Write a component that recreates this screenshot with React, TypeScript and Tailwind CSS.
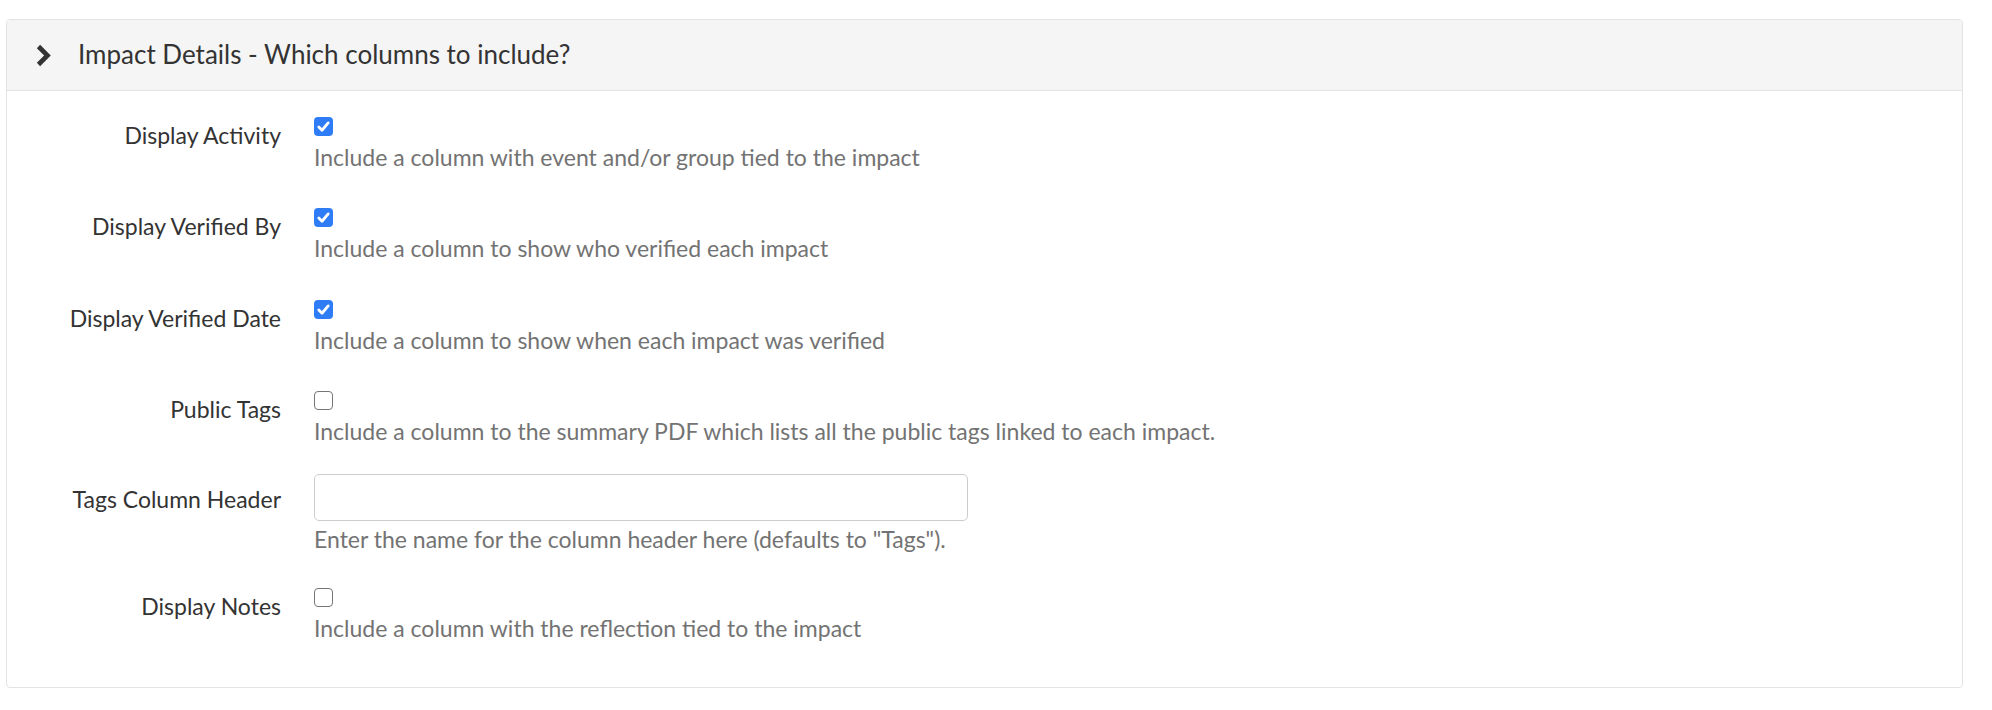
const rows: {
  label: string;
  help: string;
  kind: "check" | "text";
  checked?: boolean;
  gap: string;
}[] = [
  {
    label: "Display Activity",
    help: "Include a column with event and/or group tied to the impact",
    kind: "check",
    checked: true,
    gap: "mb-[37px]",
  },
  {
    label: "Display Verified By",
    help: "Include a column to show who verified each impact",
    kind: "check",
    checked: true,
    gap: "mb-[38px]",
  },
  {
    label: "Display Verified Date",
    help: "Include a column to show when each impact was verified",
    kind: "check",
    checked: true,
    gap: "mb-[37px]",
  },
  {
    label: "Public Tags",
    help: "Include a column to the summary PDF which lists all the public tags linked to each impact.",
    kind: "check",
    checked: false,
    gap: "mb-[29px]",
  },
  {
    label: "Tags Column Header",
    help: 'Enter the name for the column header here (defaults to "Tags").',
    kind: "text",
    gap: "mb-[35px]",
  },
  {
    label: "Display Notes",
    help: "Include a column with the reflection tied to the impact",
    kind: "check",
    checked: false,
    gap: "",
  },
];

const Checkbox = ({ checked }: { checked?: boolean }) =>
  checked ? (
    <div className="w-[19px] h-[19px] rounded-[4px] bg-[#2f7df6] flex items-center justify-center">
      <svg width="15" height="15" viewBox="0 0 16 16">
        <path
          d="M3 8.6 L6.4 12 L13 4.2"
          fill="none"
          stroke="white"
          strokeWidth="3"
          strokeLinecap="round"
          strokeLinejoin="round"
        />
      </svg>
    </div>
  ) : (
    <div className="w-[19px] h-[19px] rounded-[4px] border border-[#767676] bg-white" />
  );

export default function App() {
  return (
    <div className="min-h-screen bg-white pt-[19px] pl-[6px] pr-[29px] font-['Lato',sans-serif]">
      <div className="border border-[#e3e3e3] rounded-[4px] overflow-hidden">
        <div className="h-[71px] bg-[#f5f5f5] border-b border-[#e3e3e3] flex items-center">
          <div className="w-[71px] pl-[28px] flex items-center">
            <svg width="17" height="25" viewBox="0 0 17 25">
              <path
                d="M3.5 3.5 L12.5 12.5 L3.5 21.5"
                fill="none"
                stroke="#333"
                strokeWidth="4.6"
                strokeLinejoin="miter"
              />
            </svg>
          </div>
          <div className="text-[26px] text-[#333] -mt-[2px]">
            Impact Details - Which columns to include?
          </div>
        </div>
        <div className="pt-[26px] pb-[45px] flex flex-col">
          {rows.map((row, i) => (
            <div key={i} className={"flex gap-[33px] " + row.gap}>
              <div
                className={
                  "w-[274px] shrink-0 text-right text-[23px] leading-[28px] text-[#333] " +
                  (row.kind === "text" ? "pt-[11px]" : "pt-[4px]")
                }
              >
                {row.label}
              </div>
              <div className="flex flex-col">
                {row.kind === "check" ? (
                  <Checkbox checked={row.checked} />
                ) : (
                  <input
                    type="text"
                    className="w-[654px] h-[47px] border border-[#cccccc] rounded-[5px] bg-white px-3"
                  />
                )}
                <div
                  className={
                    "text-[23px] leading-[28px] text-[#737373] " +
                    (row.kind === "text" ? "mt-[4px]" : "mt-[7px]")
                  }
                >
                  {row.help}
                </div>
              </div>
            </div>
          ))}
        </div>
      </div>
    </div>
  );
}
